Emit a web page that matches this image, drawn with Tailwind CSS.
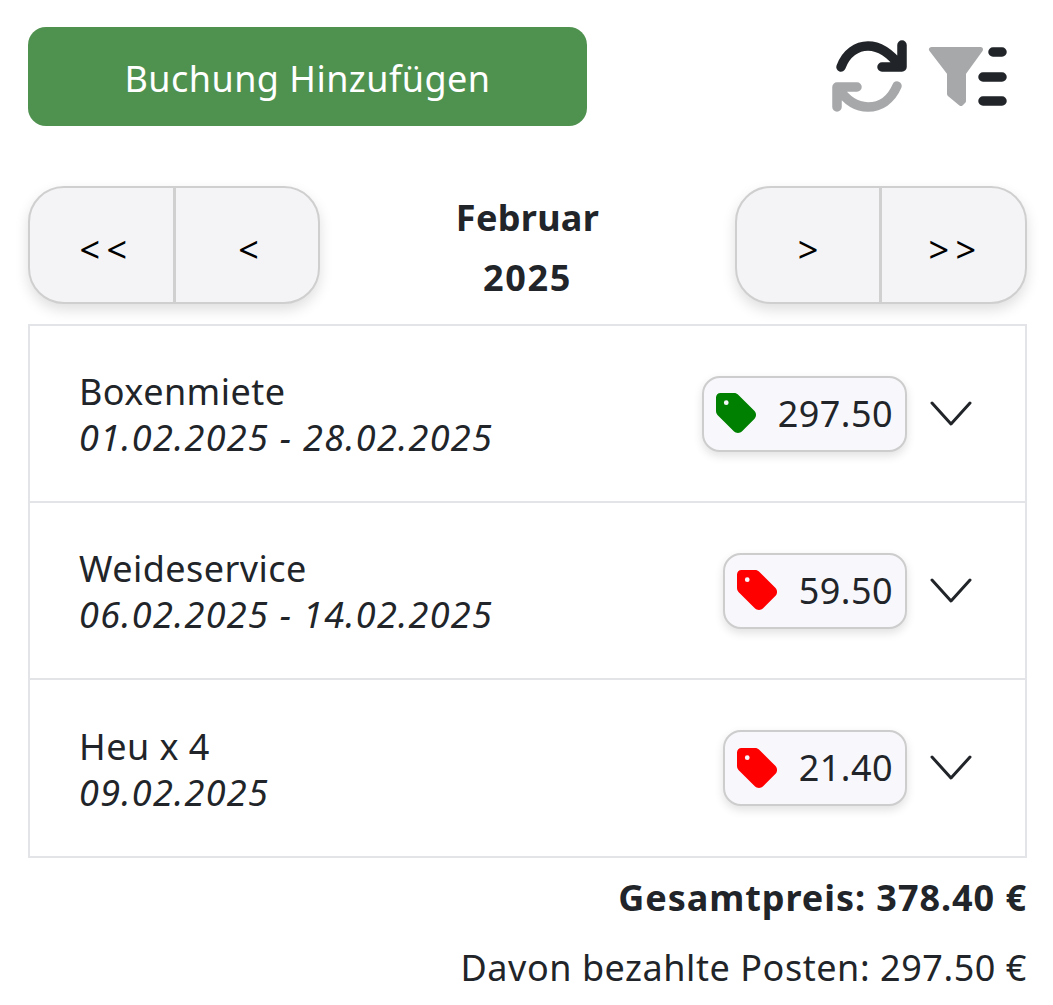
<!DOCTYPE html>
<html lang="de">
  <head>
    <meta charset="UTF-8" />
    <meta name="viewport" content="width=device-width, initial-scale=1.0" />
    <title>Buchungen</title>
    <script src="https://cdn.jsdelivr.net/npm/@tailwindcss/browser@4"></script>
  </head>
  <body class="bg-white font-['Noto_Sans',sans-serif] text-[#212529] text-[36px] leading-[46px] tracking-[0.45px]">
    <div class="w-[1053px] h-[1005px] overflow-hidden pl-[28px] pr-[26px] pt-[27px]">
      <!-- Toolbar -->
      <div class="flex items-start justify-between h-[99px]">
        <button class="w-[559px] h-[99px] pt-[5px] rounded-[18px] bg-[#4f914f] text-white">Buchung Hinzufügen</button>
        <div class="flex mt-[11px] mr-[18px]">
          <svg class="w-[80px] h-[76px]" viewBox="0 0 80 76" fill="none" stroke-width="9.5" stroke-linecap="round" stroke-linejoin="round">
            <path stroke="#212529" d="M11 29C16 15 27 8 38 8C50 8 60 15 70 28M72 7V29H52" />
            <path stroke="#a7a8aa" d="M67 48C61 62 50 69 38 69C26 69 16 62 8 50M7 69V49H27" />
          </svg>
          <svg class="w-[84px] h-[76px] ml-[15px]" viewBox="0 0 84 76">
            <path fill="#a7a8aa" stroke="#a7a8aa" stroke-width="5" stroke-linejoin="round" d="M6.5 11.5H55.5L38.5 35V63L36 65.5L24.5 56V35Z" />
            <path stroke="#212529" stroke-width="9.5" stroke-linecap="round" d="M68 14H77M58 39H77M58 63H77" />
          </svg>
        </div>
      </div>

      <!-- Month navigation -->
      <div class="flex items-start justify-between h-[117px] mt-[60px]">
        <div class="flex w-[292px] h-[118px] rounded-[36px] border-2 border-[#cfcfcf] bg-[#f4f4f6] shadow-[0_6px_14px_rgba(0,0,0,0.13)] overflow-hidden text-black tracking-normal">
          <button class="w-[146px] pt-[9px] pl-[10px] tracking-[6.4px] border-r-[3px] border-[#d0d0d0]">&lt;&lt;</button>
          <button class="flex-1 pt-[9px] pl-[3px]">&lt;</button>
        </div>
        <div class="text-center font-bold leading-[60px] w-[292px] pt-[2px]">
          <div class="tracking-[0.3px]">Februar</div>
          <div class="tracking-[1.6px]">2025</div>
        </div>
        <div class="flex w-[292px] h-[118px] rounded-[36px] border-2 border-[#cfcfcf] bg-[#f4f4f6] shadow-[0_6px_14px_rgba(0,0,0,0.13)] overflow-hidden text-black tracking-normal">
          <button class="w-[145px] pt-[9px] border-r-[3px] border-[#d0d0d0]">&gt;</button>
          <button class="flex-1 pt-[9px] pl-[4px] tracking-[6.4px]">&gt;&gt;</button>
        </div>
      </div>

      <!-- Bookings -->
      <ul class="mt-[21px] border-2 border-[#e3e4e8] divide-y-2 divide-[#e3e4e8]">
        <li class="flex items-center justify-between h-[177px] pl-[49px] pr-[52px]">
          <div class="pt-[3px]">
            <div>Boxenmiete</div>
            <div class="italic tracking-[1.3px]">01.02.2025 - 28.02.2025</div>
          </div>
          <div class="flex items-center">
            <div class="flex items-center h-[76px] px-[12px] gap-[21px] rounded-[18px] border-2 border-[#cdcdcd] bg-[#f8f8fc] shadow-[0_4px_10px_rgba(0,0,0,0.12)]">
              <svg class="w-[41px] h-[41px]" viewBox="0 32 448 448"><path fill="#008000" fill-rule="evenodd" d="M0 80V229.5c0 17 6.7 33.3 18.7 45.3l176 176c25 25 65.5 25 90.5 0L418.7 317.3c25-25 25-65.5 0-90.5l-176-176c-12-12-28.3-18.7-45.3-18.7H48C21.5 32 0 53.5 0 80zm112 32a26 26 0 1 1 0 52 26 26 0 1 1 0-52z" /></svg>
              <span>297.50</span>
            </div>
            <svg class="w-[44px] h-[26px] ml-[22px]" viewBox="0 0 44 26" fill="none" stroke="#212529" stroke-width="3" stroke-linecap="round" stroke-linejoin="round"><path d="M3 2L22 23L41 2" /></svg>
          </div>
        </li>
        <li class="flex items-center justify-between h-[177px] pl-[49px] pr-[52px]">
          <div class="pt-[3px]">
            <div>Weideservice</div>
            <div class="italic tracking-[1.3px]">06.02.2025 - 14.02.2025</div>
          </div>
          <div class="flex items-center">
            <div class="flex items-center h-[76px] px-[12px] gap-[21px] rounded-[18px] border-2 border-[#cdcdcd] bg-[#f8f8fc] shadow-[0_4px_10px_rgba(0,0,0,0.12)]">
              <svg class="w-[41px] h-[41px]" viewBox="0 32 448 448"><path fill="#ff0000" fill-rule="evenodd" d="M0 80V229.5c0 17 6.7 33.3 18.7 45.3l176 176c25 25 65.5 25 90.5 0L418.7 317.3c25-25 25-65.5 0-90.5l-176-176c-12-12-28.3-18.7-45.3-18.7H48C21.5 32 0 53.5 0 80zm112 32a26 26 0 1 1 0 52 26 26 0 1 1 0-52z" /></svg>
              <span>59.50</span>
            </div>
            <svg class="w-[44px] h-[26px] ml-[22px]" viewBox="0 0 44 26" fill="none" stroke="#212529" stroke-width="3" stroke-linecap="round" stroke-linejoin="round"><path d="M3 2L22 23L41 2" /></svg>
          </div>
        </li>
        <li class="flex items-center justify-between h-[176px] pl-[49px] pr-[52px]">
          <div class="pt-[3px]">
            <div>Heu x 4</div>
            <div class="italic tracking-[1.3px]">09.02.2025</div>
          </div>
          <div class="flex items-center">
            <div class="flex items-center h-[76px] px-[12px] gap-[21px] rounded-[18px] border-2 border-[#cdcdcd] bg-[#f8f8fc] shadow-[0_4px_10px_rgba(0,0,0,0.12)]">
              <svg class="w-[41px] h-[41px]" viewBox="0 32 448 448"><path fill="#ff0000" fill-rule="evenodd" d="M0 80V229.5c0 17 6.7 33.3 18.7 45.3l176 176c25 25 65.5 25 90.5 0L418.7 317.3c25-25 25-65.5 0-90.5l-176-176c-12-12-28.3-18.7-45.3-18.7H48C21.5 32 0 53.5 0 80zm112 32a26 26 0 1 1 0 52 26 26 0 1 1 0-52z" /></svg>
              <span>21.40</span>
            </div>
            <svg class="w-[44px] h-[26px] ml-[22px]" viewBox="0 0 44 26" fill="none" stroke="#212529" stroke-width="3" stroke-linecap="round" stroke-linejoin="round"><path d="M3 2L22 23L41 2" /></svg>
          </div>
        </li>
      </ul>

      <!-- Totals -->
      <div class="text-right mt-[17px]">
        <div class="font-bold tracking-[0.95px]">Gesamtpreis: 378.40 €</div>
        <div class="mt-[24px] tracking-[0.55px]">Davon bezahlte Posten: 297.50 €</div>
      </div>
    </div>
  </body>
</html>
